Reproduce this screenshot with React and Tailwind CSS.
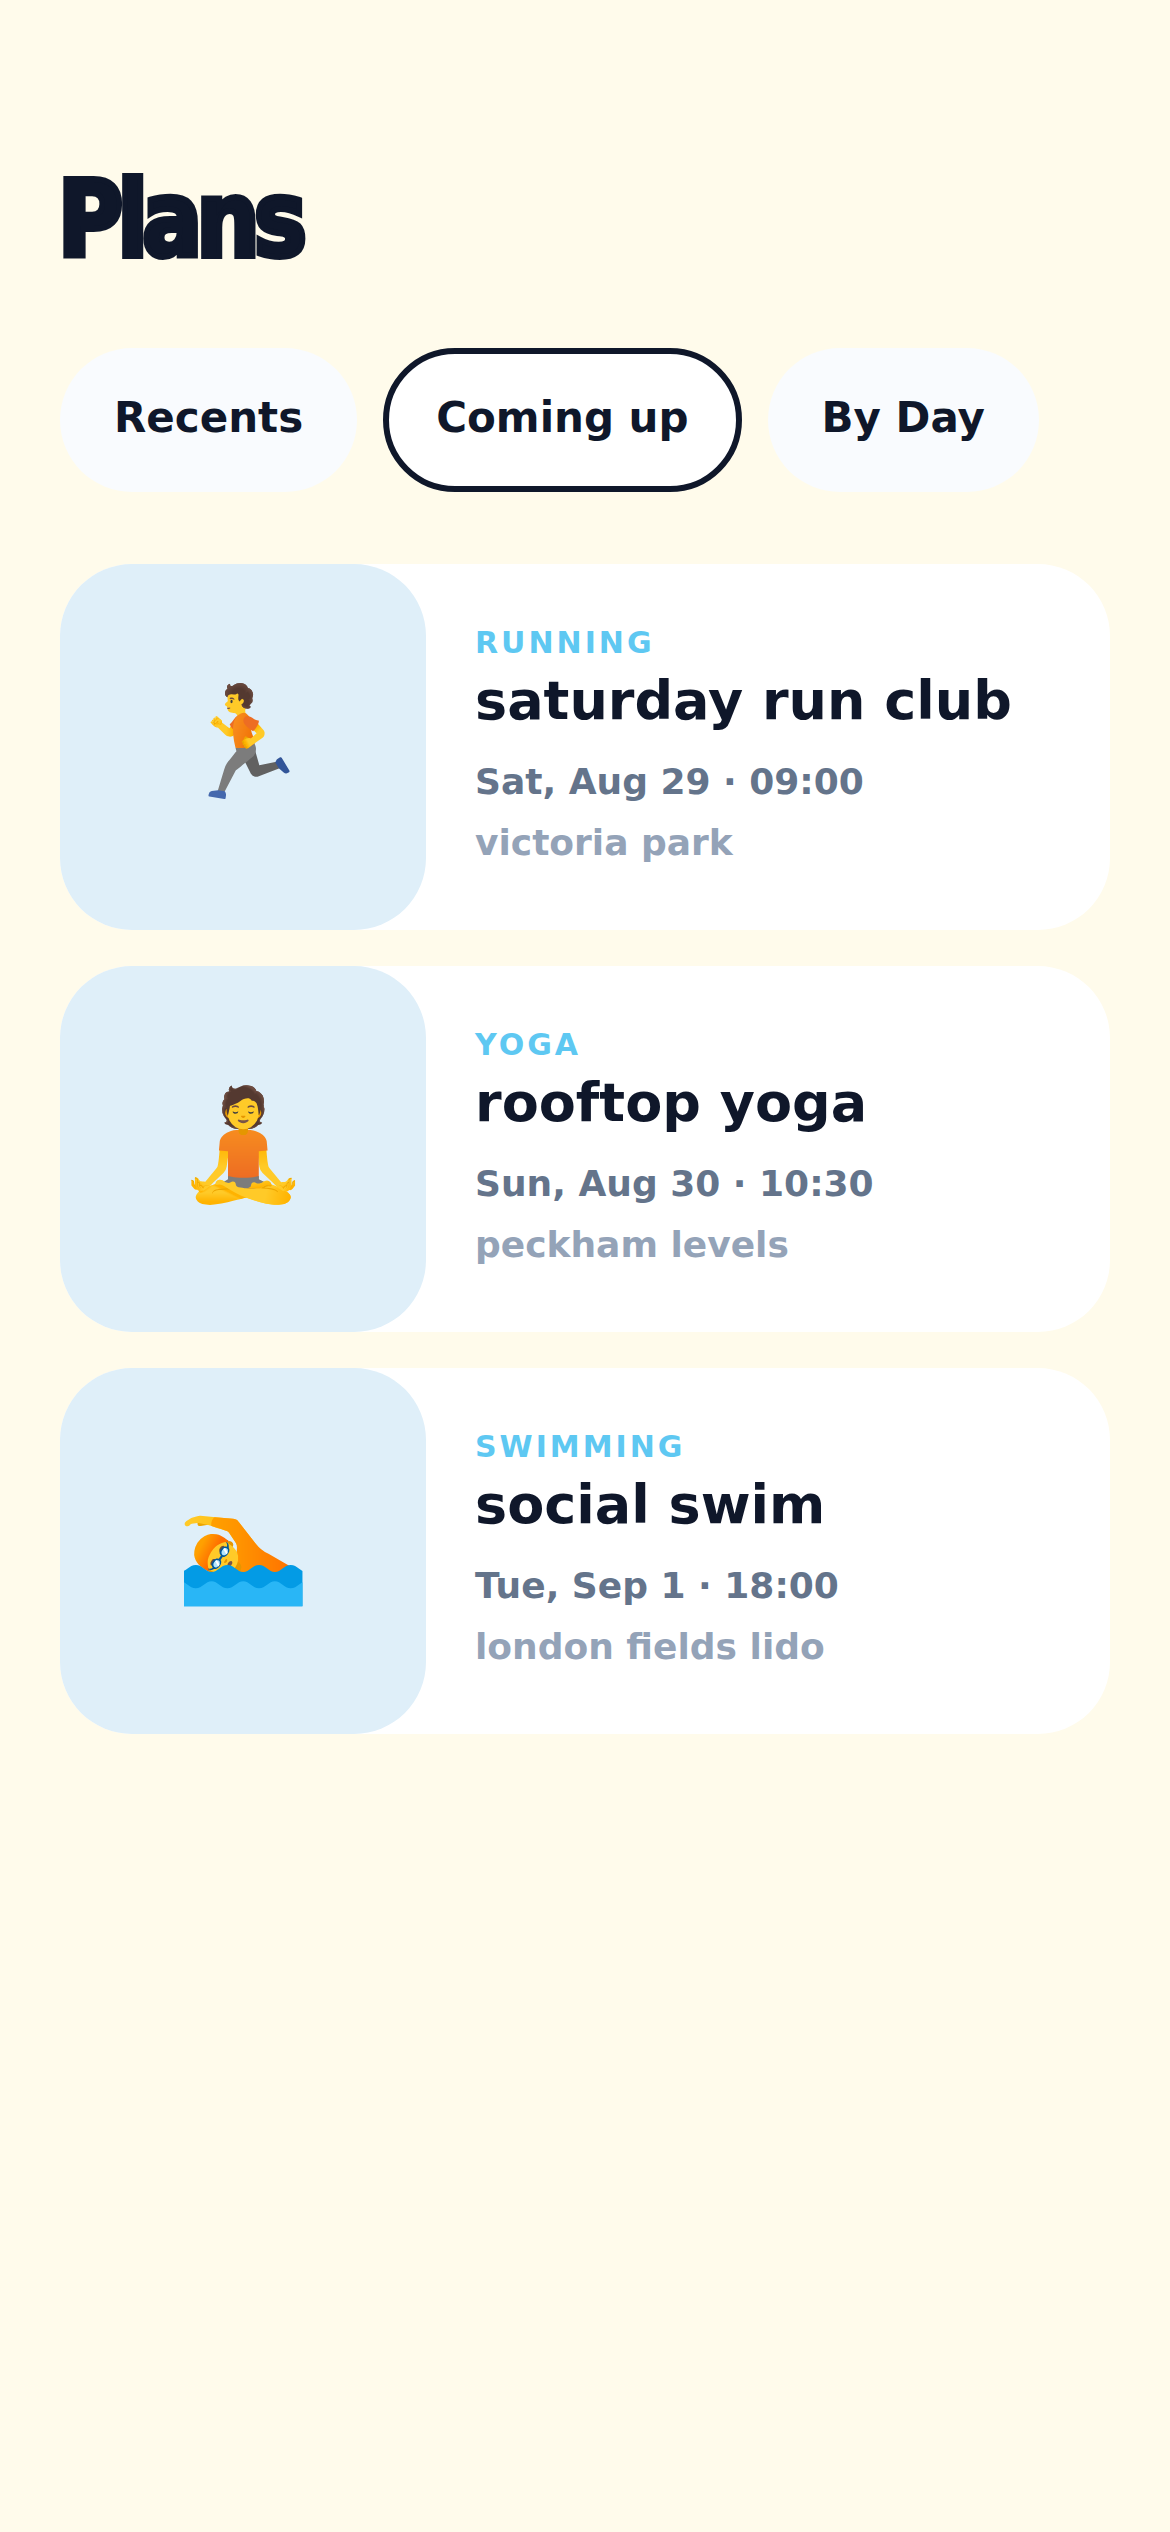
const chips = [
  { label: "Recents", active: false },
  { label: "Coming up", active: true },
  { label: "By Day", active: false },
];

const plans = [
  { emoji: "🏃", tag: "RUNNING", title: "saturday run club", when: "Sat, Aug 29 · 09:00", place: "victoria park" },
  { emoji: "🧘", tag: "YOGA", title: "rooftop yoga", when: "Sun, Aug 30 · 10:30", place: "peckham levels" },
  { emoji: "🏊", tag: "SWIMMING", title: "social swim", when: "Tue, Sep 1 · 18:00", place: "london fields lido" },
];

export default function App() {
  return (
    <div className="min-h-[2532px] bg-[#fffbeb] px-[60px] pt-[160px] font-['DejaVu_Sans',sans-serif]">
      {/* Heading */}
      <h1 className="-ml-[2px] h-[108px] origin-left scale-x-[.93] pt-[6px] text-[106px] leading-[108px] font-bold tracking-[-6px] text-[#0f172a] [font-stretch:condensed] [-webkit-text-stroke:6px_#0f172a]">
        Plans
      </h1>

      {/* Filter chips */}
      <div className="mt-[80px] flex gap-[26px]">
        {chips.map((chip) => (
          <div
            key={chip.label}
            className={`flex h-[144px] items-center rounded-[72px] pb-[6px] text-[42px] font-bold text-[#0f172a] ${
              chip.active ? "border-[6px] border-[#0f172a] bg-white px-[47px]" : "bg-[#f9fbfe] px-[54px]"
            }`}
          >
            {chip.label}
          </div>
        ))}
      </div>

      {/* Plan cards */}
      <div className="mt-[72px] flex flex-col gap-[36px]">
        {plans.map((plan) => (
          <div key={plan.title} className="flex h-[366px] w-[1050px] items-center rounded-[72px] bg-white">
            <div className="flex h-[366px] w-[366px] shrink-0 items-center justify-center rounded-[72px] bg-[#dfeff9]">
              <span className="mb-[8px] ml-[2px] text-[108px] leading-none font-['Noto_Color_Emoji',sans-serif]">{plan.emoji}</span>
            </div>
            <div className="pb-[2px] pl-[49px]">
              <div className="text-[30px] leading-[40px] font-bold tracking-[3px] text-[#5ec8f2]">{plan.tag}</div>
              <div className="mt-[4px] text-[54px] leading-[68px] font-bold text-[#0f172a]">{plan.title}</div>
              <div className="mt-[21px] text-[36px] leading-[52px] font-bold text-[#64748b]">{plan.when}</div>
              <div className="mt-[9px] text-[36px] leading-[52px] font-bold text-[#94a3b8]">{plan.place}</div>
            </div>
          </div>
        ))}
      </div>
    </div>
  );
}
